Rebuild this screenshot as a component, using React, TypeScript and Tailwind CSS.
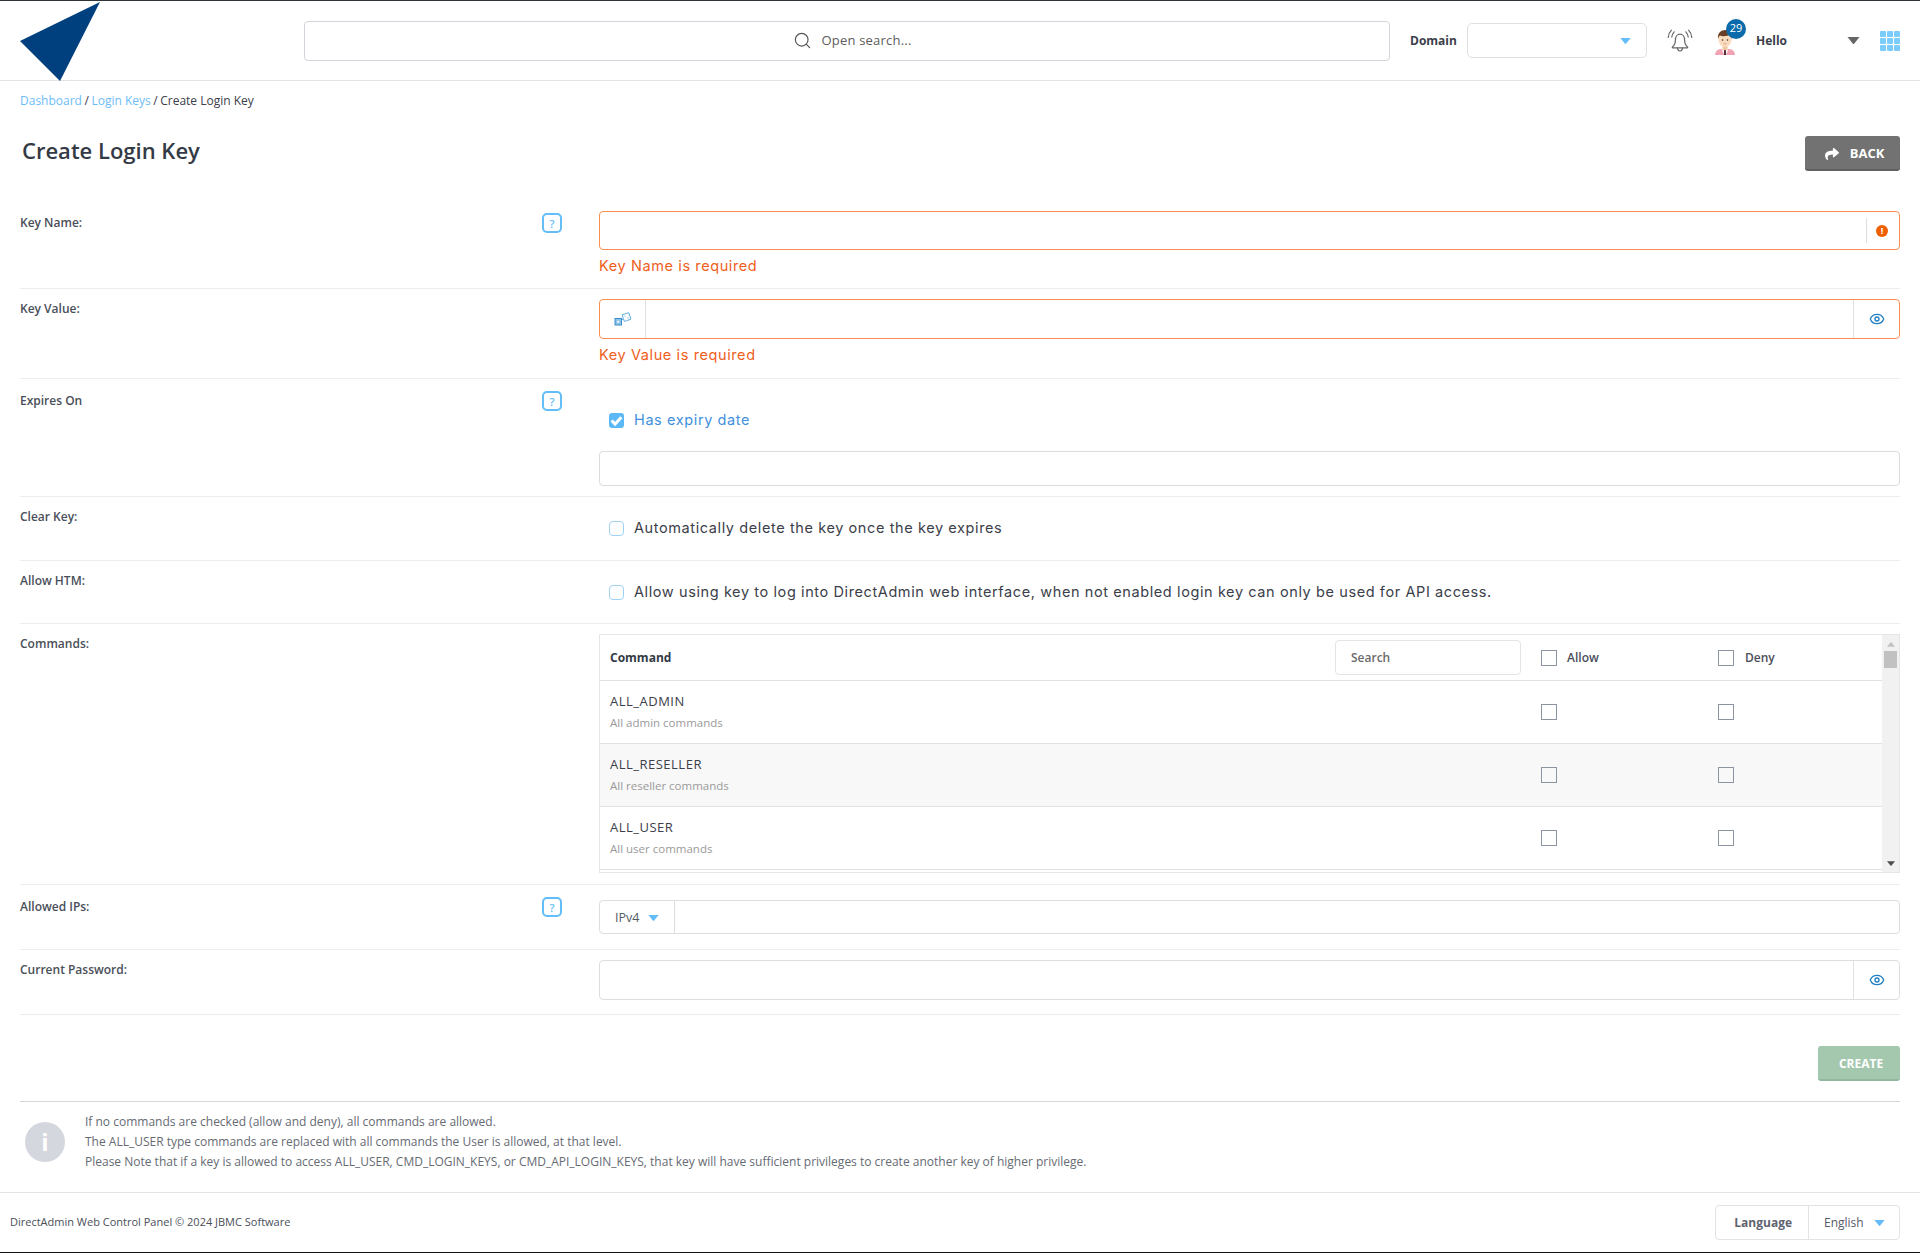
import { ReactNode } from 'react';
import { Search, Eye } from 'lucide-react';
import { FaShare } from 'react-icons/fa';

const openSans = 'font-["Open_Sans",sans-serif]';

function Caret({ className }: { className: string }) {
  return (
    <svg viewBox="0 0 12 7" className={className} fill="currentColor">
      <path d="M0 0h12L6.8 6.4a1 1 0 0 1-1.6 0z" />
    </svg>
  );
}

function HelpIcon() {
  return (
    <div className="flex h-[20px] w-[20px] items-center justify-center rounded-[5px] border-2 border-[#62bdf9] text-[11px] leading-none font-semibold text-[#62bdf9]">
      ?
    </div>
  );
}

function BellIcon() {
  return (
    <svg viewBox="0 0 26 24" className="h-[24px] w-[26px]" fill="none" stroke="#666" strokeWidth="1.2" strokeLinecap="round">
      <path d="M5.500 18c1.800-1.400 2.900-3.500 2.900-7 0-3.400 2-5.800 4.600-5.800s4.600 2.400 4.600 5.800c0 3.500 1.100 5.600 2.900 7 .4.300.2.800-.3.800H5.800c-.5 0-.7-.5-.3-.8z" />
      <path d="M10.500 19c.2 1.800 1.200 3 2.500 3s2.300-1.200 2.500-3" />
      <path d="M7.200 2.800C5.800 4.300 5 6 4.800 8M4.400 1.200C2.500 3.200 1.400 5.500 1.200 8.500M18.800 2.800c1.400 1.500 2.200 3.200 2.400 5.200M21.600 1.200c1.900 2 3 4.300 3.200 7.300" />
    </svg>
  );
}

function Avatar() {
  return (
    <svg viewBox="0 0 20 26" className="h-[26px] w-[20px]">
      <path d="M0 26c.3-3.800 2.500-5.500 6-6h8c3.500.5 5.700 2.200 6 6z" fill="#f2a3b3" />
      <path d="M7 20h6l-1.400 6H8.400z" fill="#fff" />
      <path d="M9.200 20.500h1.600l.5 5.500H8.700z" fill="#5b2b36" />
      <rect x="7.500" y="15" width="5" height="6" fill="#f1c7a3" />
      <ellipse cx="10" cy="10.500" rx="6.600" ry="7.500" fill="#fbdcbe" />
      <path d="M3 10C2.300 4 6 1 10.500 1c4 0 7 2.500 6.500 9-.8-2-1.600-3.300-2.800-4C11.500 7.500 7 7.500 5 6.500 4 7.500 3.400 8.500 3 10z" fill="#6a3f27" />
      <circle cx="7.500" cy="11" r=".8" fill="#40302a" />
      <circle cx="12.500" cy="11" r=".8" fill="#40302a" />
      <path d="M8.500 14.500c1 .6 2 .6 3 0" stroke="#c97f66" strokeWidth=".7" fill="none" />
    </svg>
  );
}

function DiceIcon() {
  return (
    <svg viewBox="0 0 18 14" className="h-[14px] w-[18px]" fill="none" stroke="#3a8cc9" strokeWidth="1">
      <rect x="1" y="6.500" width="6.500" height="6.500" fill="#8ec4ea" />
      <circle cx="4.250" cy="9.750" r="1" fill="#fff" stroke="none" />
      <g stroke="#62ace0">
        <rect x="9" y="1.500" width="7" height="7" rx="1" transform="rotate(-20 12.500 5)" />
      </g>
      <circle cx="11" cy="4" r=".6" fill="#62ace0" stroke="none" />
      <circle cx="14" cy="5.800" r=".6" fill="#62ace0" stroke="none" />
      <path d="M7.500 8.500l1.500-1.500" stroke="#62ace0" />
    </svg>
  );
}

function Check({ checked }: { checked?: boolean }) {
  if (checked) {
    return (
      <span className="flex h-[15px] w-[15px] items-center justify-center rounded-[3px] bg-[#5cb9f6]">
        <svg viewBox="0 0 12 12" className="h-[13px] w-[13px]" fill="none" stroke="#fff" strokeWidth="2.800">
          <path d="M1.500 6l3.200 3.200L10.500 3" />
        </svg>
      </span>
    );
  }
  return <span className="block h-[15px] w-[15px] rounded-[4px] border border-[#9dd2f6]" />;
}

function Box() {
  return <span className="block h-[16px] w-[16px] border border-[#8d94a1]" />;
}

function FormRow({
  label,
  help,
  labelTop,
  children,
}: {
  label: string;
  help?: boolean;
  labelTop: string;
  children: ReactNode;
}) {
  return (
    <div className="flex border-b border-[#ececec]">
      <div className={`flex w-[579px] items-start justify-between pr-[37px] ${labelTop}`}>
        <span className="mt-[1px] text-[12px] leading-[18px] font-semibold text-[#4a4f59]">{label}</span>
        {help && <HelpIcon />}
      </div>
      <div className="min-w-0 flex-1">{children}</div>
    </div>
  );
}

const commands = [
  { name: 'ALL_ADMIN', desc: 'All admin commands' },
  { name: 'ALL_RESELLER', desc: 'All reseller commands' },
  { name: 'ALL_USER', desc: 'All user commands' },
];

function CommandsTable() {
  return (
    <div className="flex h-[239px] border border-[#e6e6e6]">
      <div className="min-w-0 flex-1">
        <div className="flex h-[46px] items-center border-b border-[#e2e2e2] pl-[10px]">
          <span className="flex-1 text-[12px] font-bold text-[#333a45]">Command</span>
          <div className="flex h-[35px] w-[186px] items-center rounded-[4px] border border-[#e4e4e4] pt-[1px] pl-[15px] text-[12px] font-semibold text-[#6b6b6b]">
            Search
          </div>
          <div className="ml-[20px] flex w-[177px] items-center gap-[10px] text-[12px] font-semibold text-[#4a4f59]">
            <Box />
            Allow
          </div>
          <div className="flex w-[164px] items-center gap-[11px] text-[12px] font-semibold text-[#4a4f59]">
            <Box />
            Deny
          </div>
        </div>
        {commands.map((c, i) => (
          <div key={c.name} className={`flex h-[63px] items-center border-b border-[#e2e2e2] pl-[10px] ${i === 1 ? 'bg-[#f8f8f8]' : ''}`}>
            <div className="flex-1">
              <div className="text-[13px] leading-[21px] tracking-[0.5px] text-[#3b404a]">{c.name}</div>
              <div className="text-[11.500px] leading-[21px] text-[#9a9a9a]">{c.desc}</div>
            </div>
            <div className="w-[177px]">
              <Box />
            </div>
            <div className="w-[164px]">
              <Box />
            </div>
          </div>
        ))}
      </div>
      <div className="flex w-[17px] flex-col items-center bg-[#f1f1f1]">
        <Caret className="mt-[7px] h-[5px] w-[8px] rotate-180 text-[#c2c2c2]" />
        <div className="mt-[4px] h-[17px] w-[13px] bg-[#c1c1c1]" />
        <Caret className="mt-auto mb-[6px] h-[5px] w-[8px] text-[#505050]" />
      </div>
    </div>
  );
}

export default function App() {
  return (
    <div className={`flex h-[1253px] flex-col border-t border-b border-t-[#2f333a] border-b-[#111] bg-white ${openSans}`}>
      <header className="flex h-[80px] shrink-0 items-center border-b border-[#e3e3e3]">
        <div className="w-[304px] self-stretch">
          <svg viewBox="0 0 304 80" className="h-[80px] w-[304px]">
            <polygon points="100,1 20,40 60,80" fill="#01407f" />
          </svg>
        </div>
        <div className="flex h-[40px] w-[1086px] items-center justify-center gap-[10px] rounded-[4px] border border-[#d4d5dc] pl-[10px]">
          <Search className="h-[19px] w-[19px] text-[#555]" strokeWidth={1.500} />
          <span className="text-[13px] tracking-[0.2px] text-[#5c5c5c]">Open search...</span>
        </div>
        <span className="ml-[20px] w-[47px] text-[12px] font-bold text-[#3b404a]">Domain</span>
        <div className="ml-[10px] flex h-[35px] w-[180px] items-center justify-end rounded-[5px] border border-[#e0e0e0] pr-[15px]">
          <Caret className="h-[6px] w-[11px] text-[#64bcf9]" />
        </div>
        <div className="ml-[20px] flex w-[26px] justify-center">
          <BellIcon />
        </div>
        <div className="relative ml-[22px] flex h-[26px] w-[20px] translate-y-[1px]">
          <Avatar />
          <span className="absolute top-[-10px] left-[11px] flex h-[20px] w-[20px] items-center justify-center rounded-full bg-[#0c6cab] text-[11px] text-white">
            29
          </span>
        </div>
        <span className="ml-[21px] w-[33px] text-[12px] font-bold text-[#3b404a]">Hello</span>
        <Caret className="ml-[58px] h-[7px] w-[13px] text-[#666]" />
        <div className="ml-[20px] grid w-[20px] grid-cols-3 gap-[1px]">
          {Array.from({ length: 9 }).map((_, i) => (
            <span key={i} className="h-[6px] w-[6px] rounded-[1px] bg-[#7bcbfb]" />
          ))}
        </div>
      </header>

      <main className="flex-1 px-[20px]">
        <div className="pt-[11px] text-[12px] leading-[18px] text-[#3b404a]">
          <span className="text-[#6dbdf8]">Dashboard</span> <span className="mx-[-0.6px]">/</span> <span className="text-[#6dbdf8]">Login Keys</span> <span className="mx-[-0.6px]">/</span> Create Login Key
        </div>
        <div className="mt-[26px] flex h-[35px] items-center justify-between">
          <h1 className="mt-[-6px] ml-[2px] text-[22px] font-semibold text-[#343a45]">Create Login Key</h1>
          <button className="flex h-[35px] w-[95px] items-center justify-center gap-[11px] rounded-[3px] border-b-2 border-[#5f605f] bg-[#717271] pt-[2px] pl-[4px] text-[13px] font-bold text-white">
            <FaShare className="h-[14px] w-[14px]" />
            BACK
          </button>
        </div>

        <FormRow label="Key Name:" help labelTop="pt-[42px]">
          <div className="pt-[40px]">
            <div className="flex h-[39px] items-center justify-end rounded-[4px] border border-[#fb8f52] pr-[11px]">
              <span className="mr-[9px] h-[25px] w-px bg-[#dedede]" />
              <span className="flex h-[12px] w-[12px] items-center justify-center rounded-full bg-[#ee5f00] text-[9px] leading-none font-bold text-white">!</span>
            </div>
            <div className="mt-[7px] pb-[13px] font-['Inter',sans-serif] text-[14.500px] leading-[18px] tracking-[0.6px] text-[#ef5e1c]">Key Name is required</div>
          </div>
        </FormRow>

        <FormRow label="Key Value:" labelTop="pt-[10px]">
          <div className="pt-[10px]">
            <div className="flex h-[40px] items-stretch rounded-[4px] border border-[#fb8f52]">
              <div className="flex w-[46px] items-center justify-center border-r border-[#e0e0e0]">
                <DiceIcon />
              </div>
              <div className="flex-1" />
              <div className="flex w-[46px] items-center justify-center border-l border-[#e0e0e0]">
                <Eye className="h-[16px] w-[16px] text-[#1f7fc0]" />
              </div>
            </div>
            <div className="mt-[7px] pb-[14px] font-['Inter',sans-serif] text-[14.500px] leading-[18px] tracking-[0.6px] text-[#ef5e1c]">Key Value is required</div>
          </div>
        </FormRow>

        <FormRow label="Expires On" help labelTop="pt-[12px]">
          <div className="pt-[31px]">
            <div className="flex h-[20px] items-center gap-[10px] pl-[10px] font-['Inter',sans-serif] text-[14.500px] tracking-[0.6px] text-[#3f90dd]">
              <Check checked />
              Has expiry date
            </div>
            <div className="mt-[21px] mb-[10px] h-[35px] rounded-[4px] border border-[#dcdcdc]" />
          </div>
        </FormRow>

        <FormRow label="Clear Key:" labelTop="pt-[10px]">
          <div className="mt-[21px] mb-[22px] flex h-[20px] items-center gap-[10px] pl-[10px] font-['Inter',sans-serif] text-[14.500px] tracking-[0.6px] text-[#3b404a]">
            <Check />
            Automatically delete the key once the key expires
          </div>
        </FormRow>

        <FormRow label="Allow HTM:" labelTop="pt-[10px]">
          <div className="mt-[21px] mb-[21px] flex h-[20px] items-center gap-[10px] pl-[10px] font-['Inter',sans-serif] text-[14.500px] tracking-[0.6px] text-[#3b404a]">
            <Check />
            Allow using key to log into DirectAdmin web interface, when not enabled login key can only be used for API access.
          </div>
        </FormRow>

        <FormRow label="Commands:" labelTop="pt-[10px]">
          <div className="pt-[10px] pb-[11px]">
            <CommandsTable />
          </div>
        </FormRow>

        <FormRow label="Allowed IPs:" help labelTop="pt-[12px]">
          <div className="pt-[15px] pb-[15px]">
            <div className="flex h-[34px] items-stretch rounded-[4px] border border-[#dedede]">
              <div className="flex w-[75px] items-center gap-[9px] border-r border-[#dedede] pt-[2px] pl-[15px] text-[12.500px] text-[#555b66]">
                IPv4
                <Caret className="h-[6px] w-[11px] text-[#64bcf9]" />
              </div>
            </div>
          </div>
        </FormRow>

        <FormRow label="Current Password:" labelTop="pt-[10px]">
          <div className="pt-[10px] pb-[14px]">
            <div className="flex h-[40px] items-stretch justify-end rounded-[4px] border border-[#dedede]">
              <div className="flex w-[46px] items-center justify-center border-l border-[#e0e0e0]">
                <Eye className="h-[16px] w-[16px] text-[#1f7fc0]" />
              </div>
            </div>
          </div>
        </FormRow>

        <div className="mt-[31px] flex justify-end border-b border-[#d5d6dc] pb-[20px]">
          <button className="h-[35px] w-[82px] rounded-[3px] border-b-2 border-[#93b89f] bg-[#a4c8ae] pt-[2px] pl-[4px] text-[12px] font-bold text-white">CREATE</button>
        </div>

        <div className="flex items-center gap-[20px] pt-[10px] pl-[5px]">
          <div className="flex h-[40px] w-[40px] items-center justify-center rounded-full bg-[#d5d7de] text-[24px] leading-none font-bold text-white">i</div>
          <div className="text-[12px] leading-[20px] text-[#666b73]">
            <p>If no commands are checked (allow and deny), all commands are allowed.</p>
            <p>The ALL_USER type commands are replaced with all commands the User is allowed, at that level.</p>
            <p>Please Note that if a key is allowed to access ALL_USER, CMD_LOGIN_KEYS, or CMD_API_LOGIN_KEYS, that key will have sufficient privileges to create another key of higher privilege.</p>
          </div>
        </div>
      </main>

      <footer className="flex h-[60px] shrink-0 items-center justify-between border-t border-[#e3e3e3] pr-[20px] pl-[10px]">
        <span className="text-[11px] text-[#4a4f59]">DirectAdmin Web Control Panel © 2024 JBMC Software</span>
        <div className="flex h-[35px] w-[185px] rounded-[4px] border border-[#e3e3e3] text-[12px]">
          <div className="flex w-[93px] items-center justify-end border-r border-[#e3e3e3] pr-[16px] font-bold text-[#5f6470]">Language</div>
          <div className="flex flex-1 items-center gap-[10px] pl-[15px] text-[#555b66]">
            English
            <Caret className="h-[6px] w-[11px] text-[#64bcf9]" />
          </div>
        </div>
      </footer>
    </div>
  );
}
